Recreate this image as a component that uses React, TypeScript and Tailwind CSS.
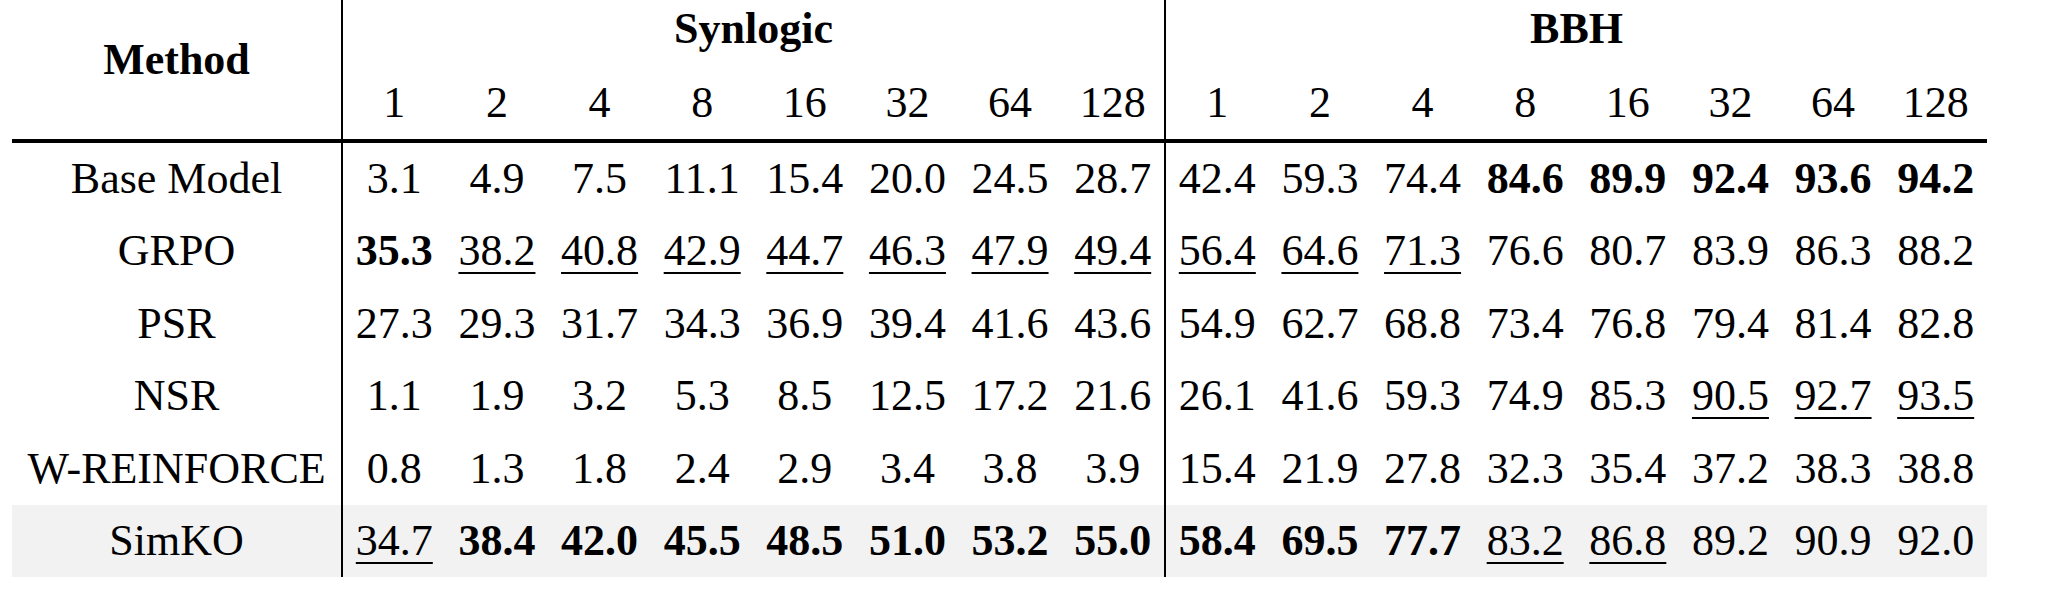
const ks = ['1', '2', '4', '8', '16', '32', '64', '128'];

// "**" = best (bold), "_" = second best (underlined)
const rows = [
  {
    name: 'Base Model',
    syn: ['3.1', '4.9', '7.5', '11.1', '15.4', '20.0', '24.5', '28.7'],
    bbh: ['42.4', '59.3', '74.4', '**84.6', '**89.9', '**92.4', '**93.6', '**94.2'],
  },
  {
    name: 'GRPO',
    syn: ['**35.3', '_38.2', '_40.8', '_42.9', '_44.7', '_46.3', '_47.9', '_49.4'],
    bbh: ['_56.4', '_64.6', '_71.3', '76.6', '80.7', '83.9', '86.3', '88.2'],
  },
  {
    name: 'PSR',
    syn: ['27.3', '29.3', '31.7', '34.3', '36.9', '39.4', '41.6', '43.6'],
    bbh: ['54.9', '62.7', '68.8', '73.4', '76.8', '79.4', '81.4', '82.8'],
  },
  {
    name: 'NSR',
    syn: ['1.1', '1.9', '3.2', '5.3', '8.5', '12.5', '17.2', '21.6'],
    bbh: ['26.1', '41.6', '59.3', '74.9', '85.3', '_90.5', '_92.7', '_93.5'],
  },
  {
    name: 'W-REINFORCE',
    syn: ['0.8', '1.3', '1.8', '2.4', '2.9', '3.4', '3.8', '3.9'],
    bbh: ['15.4', '21.9', '27.8', '32.3', '35.4', '37.2', '38.3', '38.8'],
  },
  {
    name: 'SimKO',
    syn: ['_34.7', '**38.4', '**42.0', '**45.5', '**48.5', '**51.0', '**53.2', '**55.0'],
    bbh: ['**58.4', '**69.5', '**77.7', '_83.2', '_86.8', '89.2', '90.9', '92.0'],
    highlight: true,
  },
];

function Cell({ v }: { v: string }) {
  if (v.startsWith('**')) {
    return <div className="flex-1 text-center font-bold">{v.slice(2)}</div>;
  }
  if (v.startsWith('_')) {
    return (
      <div className="flex-1 text-center">
        <span className="underline decoration-[1.5px] underline-offset-[7px]">{v.slice(1)}</span>
      </div>
    );
  }
  return <div className="flex-1 text-center">{v}</div>;
}

function Divider() {
  return <div className="w-[2px] shrink-0 self-stretch bg-black" />;
}

function GroupHeader({ title }: { title: string }) {
  return (
    <div className="flex w-[821px] shrink-0 flex-col">
      <div className="h-[67px] text-center font-bold leading-[57px]">{title}</div>
      <div className="flex h-[72px] leading-[72px]">
        {ks.map((k) => (
          <div key={k} className="flex-1 text-center">
            {k}
          </div>
        ))}
      </div>
    </div>
  );
}

export default function App() {
  return (
    <div className="min-h-screen bg-white pl-[12px] font-['Liberation_Serif','Times_New_Roman',serif] text-[44px] text-black">
      <div className="w-[1975px]">
        <div className="flex h-[139px]">
          <div className="w-[329px] shrink-0 text-center font-bold leading-[120px]">Method</div>
          <Divider />
          <GroupHeader title="Synlogic" />
          <Divider />
          <GroupHeader title="BBH" />
        </div>
        <div className="h-[4px] bg-black" />
        {rows.map((r) => (
          <div
            key={r.name}
            className={`flex h-[72.4px] leading-[72.4px] ${r.highlight ? 'bg-[#f2f2f2]' : ''}`}
          >
            <div className="w-[329px] shrink-0 whitespace-nowrap text-center">{r.name}</div>
            <Divider />
            <div className="flex w-[821px] shrink-0">
              {r.syn.map((v, i) => (
                <Cell key={i} v={v} />
              ))}
            </div>
            <Divider />
            <div className="flex w-[821px] shrink-0">
              {r.bbh.map((v, i) => (
                <Cell key={i} v={v} />
              ))}
            </div>
          </div>
        ))}
      </div>
    </div>
  );
}
